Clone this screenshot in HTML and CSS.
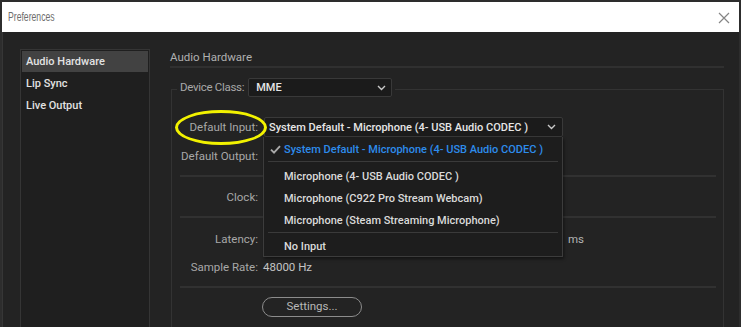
FILE: index.html
```html
<!DOCTYPE html>
<html lang="en">
<head>
    <meta charset="UTF-8">
    <title>Preferences</title>
    <link rel="stylesheet" href="styles.css">
</head>
<body>
<div class="window">
    <div class="titlebar">
        <span class="title">Preferences</span>
        <span class="close">
            <svg width="12" height="12" viewBox="0 0 12 12"><path d="M1 1L11 11M11 1L1 11" stroke="#858585" stroke-width="1.2" fill="none"/></svg>
        </span>
    </div>
    <div class="main">
        <ul class="nav">
            <li class="nav-item active">Audio Hardware</li>
            <li class="nav-item">Lip Sync</li>
            <li class="nav-item">Live Output</li>
        </ul>
        <div class="panel">
            <div class="panel-title">Audio Hardware</div>
            <fieldset class="group">
                <legend class="group-legend">
                    <span class="legend-label">Device Class:</span>
                    <div class="select select-class">
                        <span>MME</span>
                        <svg class="chev" width="9" height="6" viewBox="0 0 9 6"><path d="M1 1L4.5 4.5L8 1" stroke="#c8c8c8" stroke-width="1.4" fill="none"/></svg>
                    </div>
                </legend>

                <div class="row row-input">
                    <span class="label">Default Input:</span>
                    <div class="select-wrap">
                        <div class="select select-wide">
                            <span>System Default - Microphone (4- USB Audio CODEC )</span>
                            <svg class="chev" width="9" height="6" viewBox="0 0 9 6"><path d="M1 1L4.5 4.5L8 1" stroke="#c8c8c8" stroke-width="1.4" fill="none"/></svg>
                        </div>
                        <ul class="menu">
                            <li class="menu-item checked">
                                <svg class="check" width="11" height="9" viewBox="0 0 11 9"><path d="M1 4.6L4 7.6L10 1.2" stroke="#a9a9a9" stroke-width="1.9" fill="none"/></svg>
                                System Default - Microphone (4- USB Audio CODEC )
                            </li>
                            <li class="menu-sep"></li>
                            <li class="menu-item">Microphone (4- USB Audio CODEC )</li>
                            <li class="menu-item">Microphone (C922 Pro Stream Webcam)</li>
                            <li class="menu-item">Microphone (Steam Streaming Microphone)</li>
                            <li class="menu-sep last"></li>
                            <li class="menu-item">No Input</li>
                        </ul>
                    </div>
                    <span class="highlight"></span>
                </div>

                <div class="row row-output">
                    <span class="label">Default Output:</span>
                </div>
                <div class="divider"></div>

                <div class="row row-clock">
                    <span class="label">Clock:</span>
                </div>
                <div class="divider"></div>

                <div class="row row-latency">
                    <span class="label">Latency:</span>
                    <span class="latency-box"></span>
                    <span class="unit">ms</span>
                </div>
                <div class="row row-rate">
                    <span class="label">Sample Rate:</span>
                    <span class="value">48000 Hz</span>
                </div>
                <div class="divider"></div>

                <div class="row row-settings">
                    <span></span>
                    <div class="btn-settings">Settings...</div>
                </div>
            </fieldset>
        </div>
    </div>
</div>
</body>
</html>
```

FILE: styles.css
```css
html, body{
    margin: 0;
    padding: 0;
    background-color: #262626;
    overflow: hidden;
}
body{
    font-family: Roboto, "Liberation Sans", sans-serif;
    font-size: 11.5px;
}
.window{
    height: 325px;
    border: 2px solid #2d2d2d;
    border-bottom: none;
    background-color: #232323;
    overflow: hidden;
}
.titlebar{
    display: flex;
    align-items: center;
    justify-content: space-between;
    height: 30px;
    background-color: #fff;
    padding: 0 9px 0 6px;
}
.title{
    display: inline-block;
    font-family: "Liberation Sans", sans-serif;
    font-size: 12px;
    color: #6e6e6e;
    transform: scaleX(0.72);
    transform-origin: left center;
}
.close{
    display: flex;
    padding-top: 1px;
}
.main{
    display: flex;
    padding: 17px 15px 0 17px;
    border-left: 1px solid #363636;
}
.nav{
    list-style: none;
    margin: 0;
    padding: 1px;
    width: 126px;
    height: 300px;
    background-color: #1f1f1f;
    border: 1px solid #353535;
}
.nav-item{
    height: 22px;
    line-height: 22px;
    padding-left: 4px;
    font-size: 11px;
    font-weight: 500;
    color: #e2e2e2;
}
.nav-item.active{
    height: 21px;
    line-height: 21px;
    background-color: #424242;
    margin-bottom: 1px;
}
.panel{
    flex: 1;
    margin-left: 20px;
}
.panel-title{
    color: #b0b0b0;
    height: 17px;
    line-height: 16px;
    border-bottom: 2px solid #303030;
}
.group{
    margin: 10px 0 0 1px;
    padding: 0 0 20px 0;
    border: 1px solid #333;
    min-width: 0;
}
.group-legend{
    display: flex;
    align-items: flex-start;
    margin-left: 5px;
    padding: 0 3px 4px 3px;
}
.legend-label{
    color: #a8a8a8;
    line-height: 19px;
    margin-right: 4px;
    letter-spacing: -0.3px;
}
.select{
    display: flex;
    align-items: center;
    justify-content: space-between;
    box-sizing: border-box;
    background-color: #1b1b1b;
    border: 1px solid #393939;
    border-radius: 2px;
    color: #e6e6e6;
    font-size: 11px;
    font-weight: 500;
}
.select-class{
    width: 144px;
    height: 19px;
    padding: 0 5px 0 7px;
}
.select-wide{
    width: 299px;
    height: 20px;
    padding: 0 6px 0 4px;
}
.row{
    position: relative;
    display: grid;
    grid-template-columns: 86px auto;
    column-gap: 5px;
    align-items: center;
    height: 20px;
}
.label{
    text-align: right;
    color: #a8a8a8;
}
.row-input{
    margin-top: 16px;
    column-gap: 6px;
}
.row-output{
    margin-top: 9px;
}
.row-clock{
    margin-top: 10px;
}
.row-latency{
    margin-top: 11px;
    grid-template-columns: 86px 300px auto;
}
.row-rate{
    margin-top: 8px;
}
.row-settings{
    margin-top: 9px;
    column-gap: 4px;
}
.divider{
    height: 2px;
    background-color: #313131;
    margin: 9px 7px 0 8px;
}
.value{
    color: #c4c4c4;
}
.unit{
    color: #b4b4b4;
}
.select-wrap{
    position: relative;
}
.menu{
    position: absolute;
    top: 20px;
    left: -1px;
    z-index: 5;
    width: 300px;
    box-sizing: border-box;
    list-style: none;
    margin: 0;
    padding: 0;
    background-color: #1d1d1d;
    border: 1px solid #3c3c3c;
    border-top: none;
    box-shadow: 1px 2px 3px rgba(0, 0, 0, 0.45);
}
.menu-item{
    display: flex;
    align-items: center;
    box-sizing: border-box;
    height: 22px;
    padding: 2px 0 0 20px;
    font-size: 11px;
    font-weight: 500;
    color: #dadada;
}
.menu-item.checked{
    position: relative;
    color: #2d8cec;
}
.check{
    position: absolute;
    left: 6px;
    top: 8px;
}
.menu-sep{
    height: 1px;
    margin: 2px 4px 2px 4px;
    background-color: #3a3a3a;
}
.menu-sep.last{
    margin-bottom: 1px;
}
.highlight{
    position: absolute;
    left: 3px;
    top: -7px;
    width: 86px;
    height: 29px;
    border: 3px solid #f2f200;
    border-radius: 50%;
}
.btn-settings{
    box-sizing: border-box;
    width: 100px;
    height: 20px;
    line-height: 17px;
    text-align: center;
    border: 1.5px solid #8c8c8c;
    border-radius: 10px;
    color: #b8b8b8;
}
```
